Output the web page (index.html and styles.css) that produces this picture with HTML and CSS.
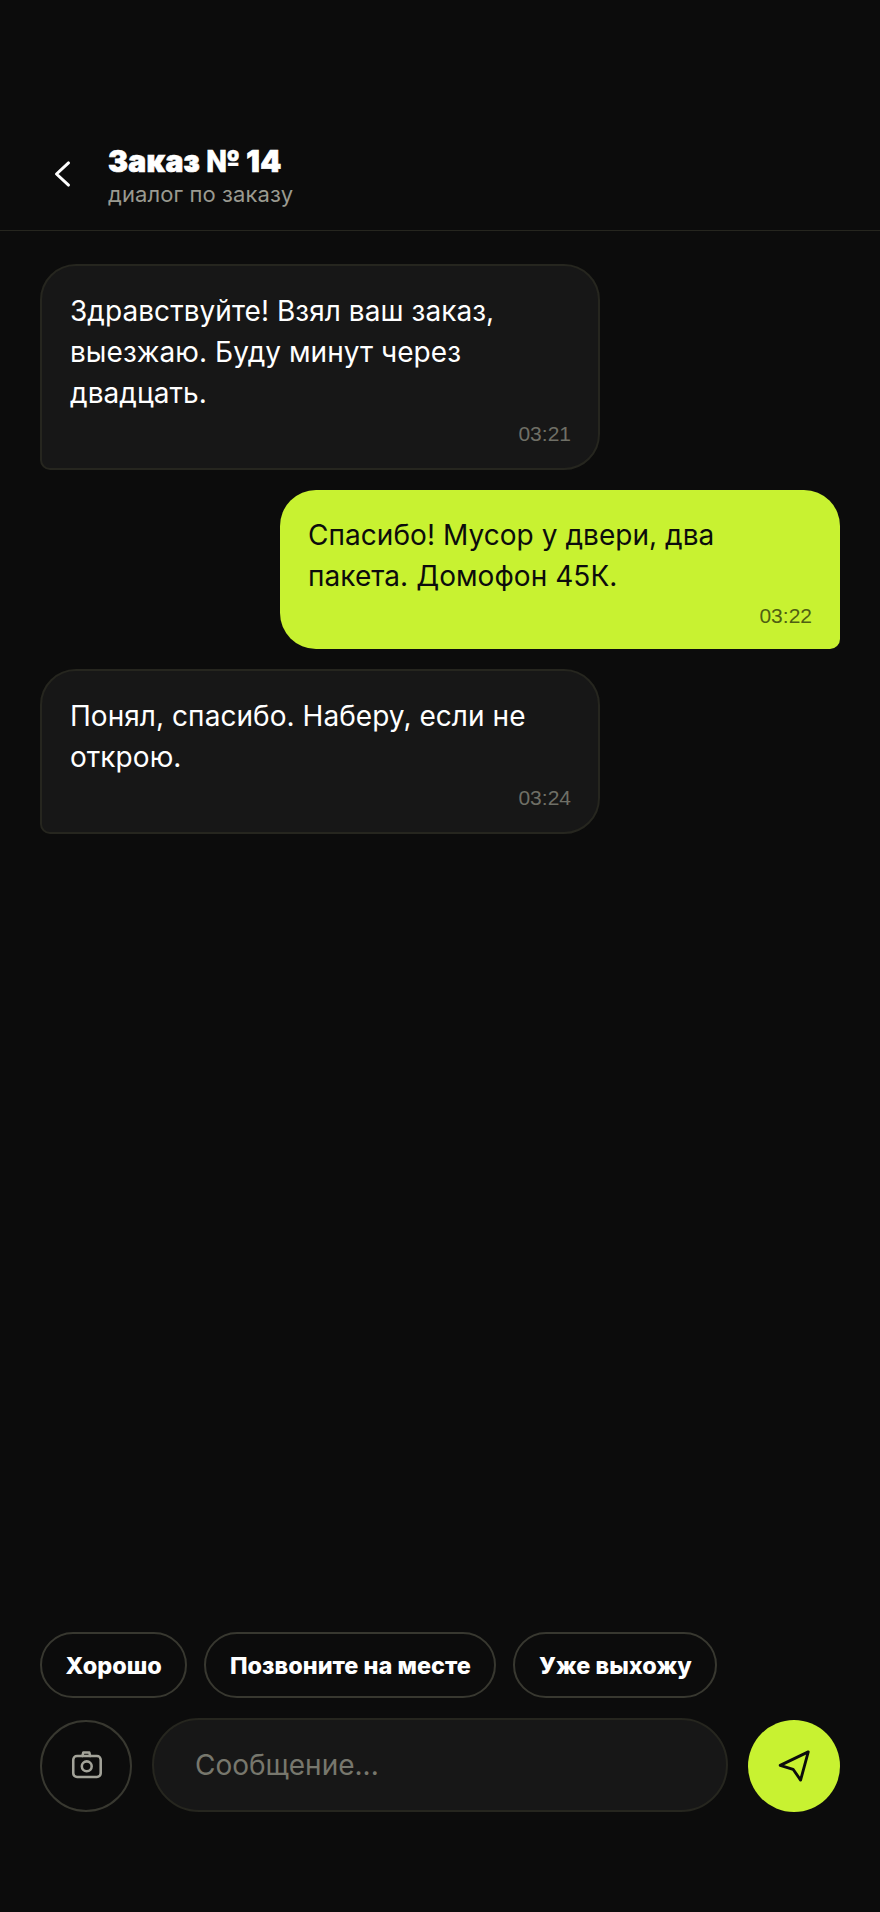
FILE: index.html
```html
<!DOCTYPE html>
<html>
  <head>
    <title>Заказ № 14</title>
    <link rel="stylesheet" href="styles.css">
  </head>
  <body>
    <div class="screen">
      <header class="topbar">
        <button class="back">
          <svg width="36" height="36" viewBox="0 0 24 24" fill="none" stroke="#fff" stroke-width="2" stroke-linecap="round" stroke-linejoin="round"><path d="M15 4.6L7 12l8 7.4"/></svg>
        </button>
        <div class="topbar__text">
          <div class="topbar__title">Заказ № 14</div>
          <div class="topbar__sub">диалог по заказу</div>
        </div>
      </header>

      <main class="messages">
        <div class="bubble bubble--in">
          <div class="bubble__text">Здравствуйте! Взял ваш заказ, выезжаю. Буду минут через двадцать.</div>
          <div class="bubble__time">03:21</div>
        </div>
        <div class="bubble bubble--out">
          <div class="bubble__text">Спасибо! Мусор у двери, два пакета. Домофон 45К.</div>
          <div class="bubble__time">03:22</div>
        </div>
        <div class="bubble bubble--in">
          <div class="bubble__text">Понял, спасибо. Наберу, если не открою.</div>
          <div class="bubble__time">03:24</div>
        </div>
      </main>

      <div class="quick">
        <button class="quick__item">Хорошо</button>
        <button class="quick__item">Позвоните на месте</button>
        <button class="quick__item">Уже выхожу</button>
      </div>

      <footer class="composer">
        <button class="round round--ghost">
          <svg width="36" height="36" viewBox="0 0 24 24" fill="none" stroke="#a3a399" stroke-width="1.7" stroke-linecap="round" stroke-linejoin="round"><rect x="3.5" y="5.3" width="18.3" height="14" rx="2.5"/><path d="M9.6 5.3l.6-2.3h4l.6 2.3"/><circle cx="12.5" cy="12.2" r="3.3"/></svg>
        </button>
        <div class="composer__input">Сообщение...</div>
        <button class="round round--send">
          <svg width="36" height="36" viewBox="0 0 24 24" fill="none" stroke="#0c0c0c" stroke-width="1.9" stroke-linecap="round" stroke-linejoin="round"><path d="M21.5 2.6L2.8 11.6l8.6 2.6 5 7.2z"/></svg>
        </button>
      </footer>
    </div>
  </body>
</html>
```

FILE: styles.css
```css
* {
  box-sizing: border-box;
}

body {
  margin: 0;
  background-color: #0c0c0c;
  color: #ffffff;
  font-family: Inter, "Noto Sans", sans-serif;
}

button {
  font-family: inherit;
  background: none;
  border: none;
  padding: 0;
  color: inherit;
}

.screen {
  display: flex;
  flex-direction: column;
  height: 1912px;
  overflow: hidden;
}

/* Header */
.topbar {
  display: flex;
  align-items: center;
  gap: 26px;
  height: 231px;
  padding: 140px 40px 22px 46px;
  border-bottom: 1px solid #26261f;
}

.back {
  display: flex;
  width: 36px;
  height: 36px;
}

.topbar__title {
  margin-top: 2px;
  font-size: 30px;
  line-height: 38px;
  font-weight: 900;
  letter-spacing: 0.3px;
  -webkit-text-stroke: 0.7px #ffffff;
}

.topbar__sub {
  font-size: 22px;
  line-height: 28px;
  letter-spacing: 0.1px;
  color: #9a9a90;
}

/* Messages */
.messages {
  flex: 1;
  display: flex;
  flex-direction: column;
  gap: 20px;
  padding: 33px 40px 0;
}

.bubble {
  width: 560px;
  padding: 25px 28px 22px;
  border-radius: 36px 36px 36px 10px;
}

.bubble--in {
  padding-right: 27px;
  padding-bottom: 23px;
  background-color: #171717;
  border: 2px solid #26261f;
}

.bubble--out {
  align-self: flex-end;
  background-color: #c8f231;
  color: #0c0c0c;
  border-radius: 36px 36px 10px 36px;
}

.bubble__text {
  font-size: 28px;
  line-height: 41px;
  letter-spacing: 0.05px;
}

.bubble__time {
  margin-top: 7px;
  text-align: right;
  font-family: "Liberation Sans", Arial, sans-serif;
  font-size: 21px;
  line-height: 23px;
  color: #6f6f66;
}

.bubble--in .bubble__time {
  margin-top: 8px;
}

.bubble--out .bubble__time {
  color: #4f5f12;
}

/* Quick replies */
.quick {
  display: flex;
  gap: 17px;
  padding: 0 40px;
}

.quick__item {
  height: 66px;
  padding: 0 23.5px;
  border: 2px solid #383830;
  border-radius: 33px;
  font-size: 23.5px;
  font-weight: 800;
}

/* Composer */
.composer {
  display: flex;
  align-items: flex-end;
  gap: 20px;
  padding: 20px 40px 100px;
}

.round {
  display: flex;
  align-items: center;
  justify-content: center;
  flex: none;
  width: 92px;
  height: 92px;
  border-radius: 50%;
}

.round--ghost {
  border: 2px solid #383830;
}

.round--send {
  background-color: #c8f231;
}

.composer__input {
  flex: 1;
  height: 94px;
  padding: 0 41px;
  display: flex;
  align-items: center;
  background-color: #171717;
  border: 2px solid #26261f;
  border-radius: 47px;
  font-size: 28px;
  color: #77776d;
}
```
